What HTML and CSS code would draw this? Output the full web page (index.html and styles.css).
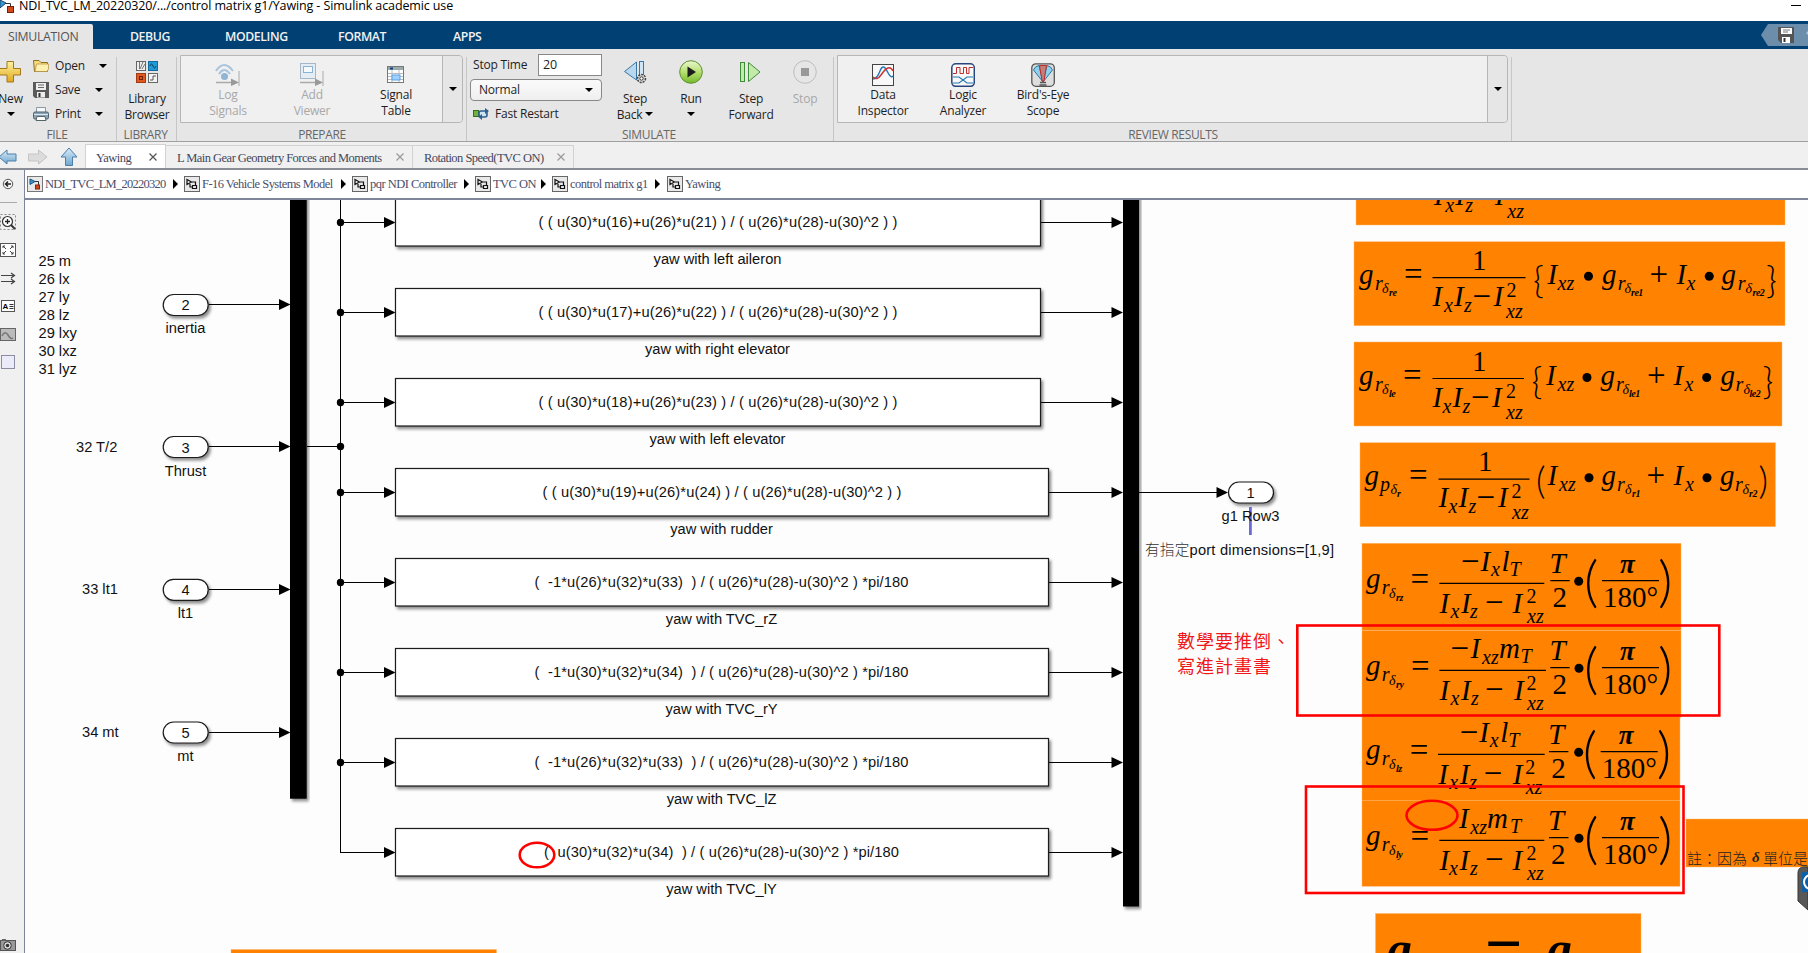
FILE: index.html
```html
<!DOCTYPE html>
<html lang="en">
<head>
<meta charset="utf-8">
<title>Simulink</title>
<link rel="stylesheet" href="styles.css">
</head>
<body>
<div class="app">
<header class="titlebar">
  <svg class="title-icon" width="14" height="14" viewBox="0 0 14 14"><path d="M0 0L6 3L0 8Z" fill="#2f9bd8" stroke="#1c3f66"/><path d="M5 3.500H10.500V7" fill="none" stroke="#333"/><rect x="7.500" y="6.500" width="6" height="6" fill="#d4481a" stroke="#6e2008"/></svg>
  <span class="title-text">NDI_TVC_LM_20220320/.../control matrix g1/Yawing - Simulink academic use</span>
  <span class="minimize"></span>
</header>

<nav class="tabs">
  <span class="tab active">SIMULATION</span>
  <span class="tab t-debug">DEBUG</span>
  <span class="tab t-model">MODELING</span>
  <span class="tab t-format">FORMAT</span>
  <span class="tab t-apps">APPS</span>
  <svg class="quick" width="47" height="22" viewBox="0 0 47 22"><path d="M0 11L7 0H47V22H7Z" fill="#6c8eab"/><g transform="translate(17 3)"><path d="M0 0H16V16H3L0 13Z" fill="#555"/><rect x="3" y="1" width="11" height="6" fill="#fff"/><path d="M5 3H12M5 5H10" stroke="#777"/><rect x="4" y="10" width="8" height="6" fill="#fff"/><rect x="5.500" y="11" width="2" height="4" fill="#333"/></g><path d="M45 9l2-2v4z" fill="#a9c6de"/></svg>
</nav>

<section class="ribbon">
  <div class="group g-file">
    <div class="body">
      <div class="new"><svg width="22" height="24" viewBox="0 0 22 24"><defs><linearGradient id="gold" x1="0" y1="0" x2="0" y2="1"><stop offset="0" stop-color="#fff3a0"/><stop offset="1" stop-color="#e0a81c"/></linearGradient></defs><path d="M7 1.500H13.500V8.500H20.500V15H13.500V22H7V15H-1V8.500H7Z" fill="url(#gold)" stroke="#a5771b"/></svg><span>New</span><i class="caret"></i></div>
      <div class="files">
        <div class="frow"><svg width="16" height="16" viewBox="0 0 16 16"><path d="M.5 2.500H6L8 4.500H14.500V13.500H1.500Z" fill="#f4dc7c" stroke="#8f6d25"/><path d="M3.500 6H15.500V11L14 13.500H2Z" fill="#fff0b0" stroke="#b18e3d" stroke-width=".7"/></svg><span>Open</span><i class="caret shift"></i></div>
        <div class="frow"><svg width="16" height="16" viewBox="0 0 16 16"><path d="M0 0H16V16H2L0 14Z" fill="#5a5a5a"/><rect x="3" y="1" width="10" height="7" fill="#eee"/><path d="M5 3H11M5 5.500H11" stroke="#666"/><rect x="4" y="10" width="8" height="5.500" fill="#eee"/><rect x="5.500" y="11" width="2" height="4" fill="#333"/></svg><span>Save</span><i class="caret"></i></div>
        <div class="frow"><svg width="16" height="16" viewBox="0 0 16 16"><path d="M3.500 1.500H12.500V7H3.500Z" fill="#f5f8fa" stroke="#8a99a5"/><rect x=".5" y="6" width="15" height="7" rx="1.500" fill="#8ba3b5" stroke="#4d6170"/><path d="M1 8.500H15" stroke="#d8e6ee"/><path d="M4 10.500H12L13 14.500H3Z" fill="#fff" stroke="#566"/></svg><span>Print</span><i class="caret"></i></div>
      </div>
    </div>
    <div class="glabel">FILE</div>
  </div>

  <div class="group g-lib">
    <div class="body center">
      <div class="big"><svg width="24" height="24" viewBox="0 0 24 24"><rect x="1.500" y="1.500" width="9" height="9" fill="#eee" stroke="#666"/><path d="M4.500 2V9M8 2L5 9M10 4L7 9" stroke="#777" fill="none"/><rect x="13.500" y="1.500" width="9" height="9" fill="#209ad4" stroke="#126a9d"/><path d="M15 6q1.500-4 3 0t3 0" stroke="#083d60" fill="none"/><rect x="1.500" y="13.500" width="9" height="9" fill="#e05a20" stroke="#a03a10"/><rect x="4.500" y="16.500" width="3" height="3" fill="none" stroke="#6e2008"/><rect x="13.500" y="13.500" width="9" height="9" fill="#f4f4f4" stroke="#666"/><path d="M15 20H18V16H21" fill="none" stroke="#555"/></svg><span>Library<br>Browser</span></div>
    </div>
    <div class="glabel">LIBRARY</div>
  </div>

  <div class="group g-prep">
    <div class="gallery">
      <div class="gitems w84">
        <div class="gi off"><svg width="26" height="24" viewBox="0 0 26 24"><path d="M1 8Q9-4 18 8M4 11Q9 3 15 11" fill="none" stroke="#a9c4dc" stroke-width="2"/><circle cx="9.500" cy="13.500" r="3.500" fill="#8fb4d4"/><path d="M1 19.500H17" stroke="#aaa" stroke-width="1.500"/><path d="M16 15.500L24 19.500L16 23Z" fill="#999"/><path d="M24 8V23" stroke="#aaa"/></svg><span>Log<br>Signals</span></div>
        <div class="gi off"><svg width="26" height="24" viewBox="0 0 26 24"><rect x="1.500" y=".5" width="15" height="15" fill="#e4edf4" stroke="#a6b8c8"/><rect x="4.500" y="3.500" width="9" height="6" fill="#f6fafd" stroke="#8bb3d4"/><path d="M1 19.500H17" stroke="#aaa" stroke-width="1.500"/><path d="M16 15.500L24 19.500L16 23Z" fill="#999"/><path d="M24 8V23" stroke="#aaa"/></svg><span>Add<br>Viewer</span></div>
        <div class="gi"><svg width="20" height="24" viewBox="0 0 20 24"><rect x="1.500" y="3.500" width="16" height="16" fill="#fff" stroke="#777"/><rect x="2" y="4" width="15" height="3" fill="#9aa"/><rect x="4" y="4.500" width="3" height="2" fill="#15407a"/><path d="M2 10.500H17M2 13.500H17M2 16.500H17M6 7V19M13 7V19" stroke="#bbb"/><rect x="6" y="12" width="8" height="5" fill="#9fd0ff" stroke="#5aa2e8"/></svg><span>Signal<br>Table</span></div>
      </div>
      <div class="gmore"><i class="caret"></i></div>
    </div>
    <div class="glabel">PREPARE</div>
  </div>

  <div class="group g-sim">
    <div class="body">
      <div class="simopts">
        <div class="stop"><span>Stop Time</span><div class="field">20</div></div>
        <div class="select"><span>Normal</span><i class="caret"></i></div>
        <div class="fast"><svg width="17" height="14" viewBox="0 0 17 14"><rect x=".5" y="3.500" width="5" height="6" fill="#6cb33f" stroke="#36701a"/><rect x="6" y="4" width="8" height="6" rx="2" fill="#cfe2f0" stroke="#2c5f8d" stroke-width="1.600"/><path d="M12 1L16 4L12 7ZM9 7L5.500 10L9 13Z" fill="#2c5f8d"/></svg><span>Fast Restart</span></div>
      </div>
      <div class="big s1"><svg width="24" height="24" viewBox="0 0 24 24"><path d="M13.500 2V20L1.500 11.500Z" fill="#b9d8ee" stroke="#3b77a6"/><rect x="16.500" y="1.500" width="4" height="17" fill="#cfe6f6" stroke="#3b77a6"/><circle cx="18.500" cy="18.500" r="4" fill="#ddd" stroke="#444" stroke-width="1.500" stroke-dasharray="2 1"/><circle cx="18.500" cy="18.500" r="1.700" fill="#fff" stroke="#333"/></svg><span>Step<br>Back <i class="caret"></i></span></div>
      <div class="big s2"><svg width="24" height="24" viewBox="0 0 24 24"><defs><linearGradient id="grn" x1="0" y1="0" x2="0" y2="1"><stop offset="0" stop-color="#eaf8d0"/><stop offset=".5" stop-color="#b6df70"/><stop offset="1" stop-color="#74b82c"/></linearGradient></defs><circle cx="12" cy="12" r="11.300" fill="url(#grn)" stroke="#5f8f32"/><path d="M8.500 6.500L17 12L8.500 17.500Z" fill="#1c1c1c"/></svg><span>Run<br><i class="caret"></i></span></div>
      <div class="big s3"><svg width="24" height="24" viewBox="0 0 24 24"><rect x="1.500" y="2.500" width="4" height="19" fill="#c4eaa8" stroke="#3f8a3b"/><path d="M9.500 2.500L21 12L9.500 21.500Z" fill="#c4eaa8" stroke="#3f8a3b"/></svg><span>Step<br>Forward</span></div>
      <div class="big s4 off"><svg width="24" height="24" viewBox="0 0 24 24"><circle cx="12" cy="12" r="11.300" fill="#e6e6e6" stroke="#bdbdbd"/><rect x="8" y="8" width="8" height="8" fill="#999"/></svg><span>Stop</span></div>
    </div>
    <div class="glabel">SIMULATE</div>
  </div>

  <div class="group g-rev">
    <div class="gallery">
      <div class="gitems w80">
        <div class="gi"><svg width="24" height="24" viewBox="0 0 24 24"><rect x="1.500" y="1.500" width="21" height="21" fill="#f8f8f8" stroke="#444"/><path d="M2 16Q6 16 9 8T16 8T22 13" fill="none" stroke="#2577b5" stroke-width="1.400"/><path d="M2 14Q6 18 10 12T17 5T22 8" fill="none" stroke="#c33" stroke-width="1.400"/></svg><span>Data<br>Inspector</span></div>
        <div class="gi"><svg width="24" height="24" viewBox="0 0 24 24"><rect x=".8" y=".8" width="22.500" height="22.500" rx="4" fill="#f8f8f8" stroke="#27467e" stroke-width="1.500"/><path d="M2 10.500H5.500V4.500H9V10.500H12.500V4.500H15.500V10.500H18V4.500H22" fill="none" stroke="#c22b2b"/><path d="M2 14H8L16 20H22M2 20H8L16 14H22" fill="none" stroke="#2577b5" stroke-width="1.200"/></svg><span>Logic<br>Analyzer</span></div>
        <div class="gi"><svg width="24" height="24" viewBox="0 0 24 24"><rect x=".8" y=".8" width="22.500" height="22.500" rx="4" fill="#dedede" stroke="#555" stroke-width="1.300"/><path d="M2.500 7Q4 3 8 2.500L12 19Z M21.500 7Q20 3 16 2.500L12 19Z" fill="#8fd0ee" stroke="#2879a8"/><path d="M8.500 2.500H15.500L13 18H11Z" fill="#bf8077" stroke="#c22b2b"/><path d="M9 19.500H15M8.500 22H15.500" stroke="#555" stroke-width="1.500"/></svg><span>Bird's-Eye<br>Scope</span></div>
      </div>
      <div class="gmore"><i class="caret"></i></div>
    </div>
    <div class="glabel">REVIEW RESULTS</div>
  </div>
</section>

<section class="doctabs">
  <div class="arrows">
    <svg width="85" height="26" viewBox="0 0 85 26"><defs><linearGradient id="blu" x1="0" y1="0" x2="0" y2="1"><stop offset="0" stop-color="#d8ecf8"/><stop offset="1" stop-color="#6fa6cf"/></linearGradient></defs><path d="M-1 15L7 8V12H16V19H7V22Z" fill="url(#blu)" stroke="#4a7ea8"/><path d="M47 15L38.500 8V12H28.500V19H38.500V22Z" fill="#dcdcdc" stroke="#c4c4c4"/><path d="M69 6L77 15H72.500V23.500H65.500V15H61Z" fill="url(#blu)" stroke="#4a7ea8"/></svg>
  </div>
  <div class="dt on d1"><span>Yawing</span><svg width="8" height="8" viewBox="0 0 8 8"><path d="M.5.5L7.500 7.500M7.500.5L.5 7.500" stroke="#555" stroke-width="1.200"/></svg></div>
  <div class="dt d2"><span>L Main Gear Geometry Forces and Moments</span><svg width="8" height="8" viewBox="0 0 8 8"><path d="M.5.5L7.500 7.500M7.500.5L.5 7.500" stroke="#999" stroke-width="1.200"/></svg></div>
  <div class="dt d3"><span>Rotation Speed(TVC ON)</span><svg width="8" height="8" viewBox="0 0 8 8"><path d="M.5.5L7.500 7.500M7.500.5L.5 7.500" stroke="#999" stroke-width="1.200"/></svg></div>
</section>

<div class="work">
<aside class="rail">
  <svg width="24" height="783" viewBox="0 170 24 783">
    <circle cx="8" cy="184" r="4.700" fill="#f8f8f8" stroke="#555"/><path d="M11 184H6M8 181.500L5.500 184L8 186.500" fill="none" stroke="#222" stroke-width="1.500"/>
    <path d="M0 202.500H17" stroke="#aaa"/>
    <rect x=".5" y="214.500" width="15" height="15" fill="none" stroke="#888" stroke-dasharray="2 2"/><circle cx="7.500" cy="221.500" r="5" fill="#fff" stroke="#333" stroke-width="1.200"/><path d="M5 221.500H10M7.500 219V224" stroke="#222" stroke-width="1.300"/><path d="M11 225L15 229" stroke="#333" stroke-width="2"/>
    <rect x=".5" y="243.500" width="15" height="13" fill="#fff" stroke="#555"/><path d="M3 248V246H5M11 246H13V248M13 252V254H11M5 254H3V252M3 246L6 249M13 246L10 249M13 254L10 251M3 254L6 251" fill="none" stroke="#444"/>
    <path d="M1 275.500H14M1 281.500H14M11 273L14.500 275.500L11 278M11 279L14.500 281.500L11 284" fill="none" stroke="#444" stroke-width="1.200"/>
    <rect x="1.500" y="300.500" width="13" height="11" fill="#fff" stroke="#555"/><text x="2.500" y="309" class="mini">A</text><path d="M9.500 304.500H13.500M9.500 306.500H13.500M9.500 308.500H13.500" stroke="#333"/>
    <rect x=".5" y="328.500" width="15" height="12" fill="#bbb" stroke="#666"/><path d="M2 336Q5 330 8 335T13 338" fill="none" stroke="#777" stroke-width="1.500"/>
    <rect x="1.500" y="355.500" width="13" height="13" fill="#ebebfa" stroke="#8a8ea0"/>
    <rect x=".5" y="940.500" width="15" height="10" fill="#999" stroke="#555"/><rect x="2" y="939" width="4" height="2" fill="#666"/><circle cx="7.500" cy="945.500" r="3.800" fill="#ddd" stroke="#333"/><circle cx="7.500" cy="945.500" r="1.800" fill="#333"/>
  </svg>
</aside>
<main class="pane">
  <div class="crumbs">
    <svg class="ci" viewBox="0 0 16 16"><rect x=".5" y=".5" width="15" height="15" fill="#e9e9e9" stroke="#777"/><path d="M3 3L8 5.500L3 8.500Z" fill="#2f9bd8" stroke="#1c4f76"/><path d="M8 5.500H11.500V9" fill="none" stroke="#333"/><rect x="8.500" y="9" width="4" height="4" fill="#d4481a" stroke="#7e2808"/></svg><span class="b1">NDI_TVC_LM_20220320</span><i class="tri"></i>
    <svg class="ci" viewBox="0 0 16 16"><rect x=".5" y=".5" width="15" height="15" fill="#e9e9e9" stroke="#666"/><path d="M3 3.500L7.500 6L3 8.500ZM7.500 6H11.500V9M8.500 9.500H12.500V12.500H8.500ZM8.500 11H6V8" fill="none" stroke="#111" stroke-width="1.200"/></svg><span class="b2">F-16 Vehicle Systems Model</span><i class="tri"></i>
    <svg class="ci" viewBox="0 0 16 16"><rect x=".5" y=".5" width="15" height="15" fill="#e9e9e9" stroke="#666"/><path d="M3 3.500L7.500 6L3 8.500ZM7.500 6H11.500V9M8.500 9.500H12.500V12.500H8.500ZM8.500 11H6V8" fill="none" stroke="#111" stroke-width="1.200"/></svg><span class="b3">pqr NDI Controller</span><i class="tri"></i>
    <svg class="ci" viewBox="0 0 16 16"><rect x=".5" y=".5" width="15" height="15" fill="#e9e9e9" stroke="#666"/><path d="M3 3.500L7.500 6L3 8.500ZM7.500 6H11.500V9M8.500 9.500H12.500V12.500H8.500ZM8.500 11H6V8" fill="none" stroke="#111" stroke-width="1.200"/></svg><span class="b4">TVC ON</span><i class="tri"></i>
    <svg class="ci" viewBox="0 0 16 16"><rect x=".5" y=".5" width="15" height="15" fill="#e9e9e9" stroke="#666"/><path d="M3 3.500L7.500 6L3 8.500ZM7.500 6H11.500V9M8.500 9.500H12.500V12.500H8.500ZM8.500 11H6V8" fill="none" stroke="#111" stroke-width="1.200"/></svg><span class="b5">control matrix g1</span><i class="tri last"></i>
    <svg class="ci" viewBox="0 0 16 16"><rect x=".5" y=".5" width="15" height="15" fill="#e9e9e9" stroke="#666"/><path d="M3 3.500L7.500 6L3 8.500ZM7.500 6H11.500V9M8.500 9.500H12.500V12.500H8.500ZM8.500 11H6V8" fill="none" stroke="#111" stroke-width="1.200"/></svg><span class="b6">Yawing</span>
  </div>

  <svg class="canvas" width="1783" height="753" viewBox="25 200 1783 753">
    <defs>
      <filter id="sh" x="-10%" y="-20%" width="125%" height="150%"><feDropShadow dx="2" dy="2.500" stdDeviation="1.500" flood-color="#000" flood-opacity=".45"/></filter>
      <path id="ah" d="M-11.500 -5.500L0 0L-11.500 5.500Z"/>
    </defs>

    <!-- mux and demux bars -->
    <rect x="290" y="180" width="16.700" height="618.700" filter="url(#sh)"/>
    <rect x="1123" y="180" width="16" height="726.500" filter="url(#sh)"/>

    <!-- signal lines -->
    <g class="wire">
      <path d="M340.500 200V852.500"/><path d="M307 446.500H340.500"/>
      <path d="M209 304.500H282M209 446.500H282M209 589.500H282M209 732.500H282"/>
      <path d="M340 222.500H386M340 312.500H386M340 402.500H386M340 492.500H386M340 582.500H386M340 672.500H386M340 762.500H386M340 852.500H386"/>
      <path d="M1041 222.500H1114M1041 312.500H1114M1041 402.500H1114M1049 492.500H1114M1049 582.500H1114M1049 672.500H1114M1049 762.500H1114M1049 852.500H1114M1139 492.500H1218"/>
    </g>
    <g>
      <use href="#ah" x="290.500" y="304.500"/><use href="#ah" x="290.500" y="446.500"/><use href="#ah" x="290.500" y="589.500"/><use href="#ah" x="290.500" y="732.500"/>
      <use href="#ah" x="395.500" y="222.500"/><use href="#ah" x="395.500" y="312.500"/><use href="#ah" x="395.500" y="402.500"/><use href="#ah" x="395.500" y="492.500"/><use href="#ah" x="395.500" y="582.500"/><use href="#ah" x="395.500" y="672.500"/><use href="#ah" x="395.500" y="762.500"/><use href="#ah" x="395.500" y="852.500"/>
      <use href="#ah" x="1123" y="222.500"/><use href="#ah" x="1123" y="312.500"/><use href="#ah" x="1123" y="402.500"/><use href="#ah" x="1123" y="492.500"/><use href="#ah" x="1123" y="582.500"/><use href="#ah" x="1123" y="672.500"/><use href="#ah" x="1123" y="762.500"/><use href="#ah" x="1123" y="852.500"/>
      <use href="#ah" x="1228" y="492.500"/>
      <circle cx="340.500" cy="222.500" r="3.700"/><circle cx="340.500" cy="312.500" r="3.700"/><circle cx="340.500" cy="402.500" r="3.700"/><circle cx="340.500" cy="446.500" r="3.700"/><circle cx="340.500" cy="492.500" r="3.700"/><circle cx="340.500" cy="582.500" r="3.700"/><circle cx="340.500" cy="672.500" r="3.700"/><circle cx="340.500" cy="762.500" r="3.700"/>
    </g>

    <!-- function blocks -->
    <g class="block">
      <rect x="395.500" y="190.500" width="645" height="55.500"/><rect x="395.500" y="288.500" width="645" height="47.500"/><rect x="395.500" y="378.500" width="645" height="47.500"/>
      <rect x="395.500" y="468.500" width="653" height="47.500"/><rect x="395.500" y="558.500" width="653" height="47.500"/><rect x="395.500" y="648.500" width="653" height="47.500"/><rect x="395.500" y="738.500" width="653" height="47.500"/><rect x="395.500" y="828.500" width="653" height="47.500"/>
      <rect x="163.200" y="294.500" width="45" height="21" rx="10.500"/><rect x="163.200" y="436.500" width="45" height="21" rx="10.500"/><rect x="163.200" y="579.300" width="45" height="21" rx="10.500"/><rect x="163.200" y="722" width="45" height="21" rx="10.500"/>
      <rect x="1228.500" y="482" width="45" height="21" rx="10.500"/>
    </g>
    <rect x="1249" y="507" width="2.800" height="28" fill="#6a6ad8"/>

    <g class="lbl mid">
      <text x="718" y="227.300" textLength="359">( ( u(30)*u(16)+u(26)*u(21) ) / ( u(26)*u(28)-u(30)^2 ) )</text><text x="717.500" y="264">yaw with left aileron</text>
      <text x="718" y="317.300" textLength="359">( ( u(30)*u(17)+u(26)*u(22) ) / ( u(26)*u(28)-u(30)^2 ) )</text><text x="717.500" y="354">yaw with right elevator</text>
      <text x="718" y="407.300" textLength="359">( ( u(30)*u(18)+u(26)*u(23) ) / ( u(26)*u(28)-u(30)^2 ) )</text><text x="717.500" y="444">yaw with left elevator</text>
      <text x="722" y="497.300" textLength="359">( ( u(30)*u(19)+u(26)*u(24) ) / ( u(26)*u(28)-u(30)^2 ) )</text><text x="721.500" y="534">yaw with rudder</text>
      <text x="721.500" y="587.300" textLength="374">(  -1*u(26)*u(32)*u(33)  ) / ( u(26)*u(28)-u(30)^2 ) *pi/180</text><text x="721.500" y="624">yaw with TVC_rZ</text>
      <text x="721.500" y="677.300" textLength="374">(  -1*u(30)*u(32)*u(34)  ) / ( u(26)*u(28)-u(30)^2 ) *pi/180</text><text x="721.500" y="714">yaw with TVC_rY</text>
      <text x="721.500" y="767.300" textLength="374">(  -1*u(26)*u(32)*u(33)  ) / ( u(26)*u(28)-u(30)^2 ) *pi/180</text><text x="721.500" y="804">yaw with TVC_lZ</text>
      <text x="721.500" y="857.300" textLength="355">(  u(30)*u(32)*u(34)  ) / ( u(26)*u(28)-u(30)^2 ) *pi/180</text><text x="721.500" y="894">yaw with TVC_lY</text>
      <text x="185.500" y="310">2</text><text x="185.500" y="333">inertia</text>
      <text x="185.500" y="452.500">3</text><text x="185.500" y="475.500">Thrust</text>
      <text x="185.500" y="595">4</text><text x="185.500" y="618.300">lt1</text>
      <text x="185.500" y="738">5</text><text x="185.500" y="761">mt</text>
      <text x="1250.500" y="497.500">1</text><text x="1250.500" y="521">g1 Row3</text>
    </g>
    <g class="lbl">
      <text x="38.500" y="266">25 m</text><text x="38.500" y="284">26 lx</text><text x="38.500" y="302">27 ly</text><text x="38.500" y="320">28 lz</text><text x="38.500" y="338">29 lxy</text><text x="38.500" y="356">30 lxz</text><text x="38.500" y="374">31 lyz</text>
      <text x="76" y="452">32 T/2</text><text x="82" y="594">33 lt1</text><text x="82" y="737">34 mt</text>
      <text x="1145" y="555.300" textLength="189"><tspan class="cjk">有指定</tspan>port dimensions=[1,9]</text>
    </g>
    <g class="red-note"><text x="1177" y="648">數學要推倒、</text><text x="1177" y="672.500">寫進計畫書</text></g>

    <!-- equation panels -->
    <g class="panel">
      <rect x="1356" y="190" width="429" height="35"/><rect x="1354" y="241.700" width="431" height="84"/><rect x="1354" y="342" width="428" height="84"/><rect x="1360" y="442.700" width="415.500" height="84"/>
      <rect x="1362" y="543.300" width="319" height="87"/><rect x="1362" y="630.500" width="319" height="87"/><rect x="1362" y="716" width="318" height="84.300"/><rect x="1362" y="800.300" width="318" height="86"/>
      <rect x="1686" y="819" width="130" height="48"/><rect x="1375.500" y="913.500" width="265.500" height="60"/><rect x="231" y="949.500" width="265.500" height="20"/>
    </g>

    <g class="eq" transform="translate(1355.300 141.700)">
      <text><tspan x="78.500" y="63.700">I</tspan><tspan class="s" x="90" y="70">x</tspan><tspan x="100" y="63.700">I</tspan><tspan class="s" x="110" y="70">z</tspan><tspan x="139.500" y="63.700">I</tspan><tspan class="s" x="152" y="76">xz</tspan></text></g>

    <g class="eq" transform="translate(1354 242)"><path class="bar" d="M78.500 35.700H171.500"/><circle cx="234.500" cy="34.300" r="4.500"/><circle cx="355.300" cy="34.300" r="4.500"/>
      <text><tspan x="5" y="42">g</tspan><tspan class="s" x="21" y="48.300">r</tspan><tspan class="d" x="28" y="51">δ</tspan><tspan class="t" x="35" y="54">re</tspan><tspan class="o" x="50" y="43">=</tspan><tspan class="n" x="118" y="27.500">1</tspan><tspan x="78.500" y="63.700">I</tspan><tspan class="s" x="90" y="70">x</tspan><tspan x="100" y="63.700">I</tspan><tspan class="s" x="110" y="70">z</tspan><tspan class="o" x="118.500" y="65">−</tspan><tspan x="139.500" y="63.700">I</tspan><tspan class="n s" x="152.500" y="54.700">2</tspan><tspan class="s" x="152" y="76">xz</tspan><tspan class="b" x="179" y="50.500">{</tspan><tspan x="193.500" y="42">I</tspan><tspan class="s" x="203.500" y="48.300">xz</tspan><tspan x="248" y="42">g</tspan><tspan class="s" x="263.700" y="48.300">r</tspan><tspan class="d" x="270.500" y="51">δ</tspan><tspan class="t" x="277" y="54">re1</tspan><tspan class="o" x="295.500" y="43">+</tspan><tspan x="322.500" y="42">I</tspan><tspan class="s" x="332.500" y="48.300">x</tspan><tspan x="367.500" y="42">g</tspan><tspan class="s" x="383.700" y="48.300">r</tspan><tspan class="d" x="391.500" y="51">δ</tspan><tspan class="t" x="398.500" y="54">re2</tspan><tspan class="b" x="412" y="50.500">}</tspan></text></g>

    <g class="eq" transform="translate(1354 342.500)"><path class="bar" d="M78.500 36H170"/><circle cx="233" cy="35" r="4.500"/><circle cx="352.700" cy="35" r="4.500"/>
      <text><tspan x="5" y="42.500">g</tspan><tspan class="s" x="21" y="48.500">r</tspan><tspan class="d" x="28" y="51.500">δ</tspan><tspan class="t" x="35" y="54.500">le</tspan><tspan class="o" x="49" y="43.500">=</tspan><tspan class="n" x="118" y="28">1</tspan><tspan x="78.500" y="64">I</tspan><tspan class="s" x="88.500" y="70.500">x</tspan><tspan x="98.500" y="64">I</tspan><tspan class="s" x="108.500" y="70.500">z</tspan><tspan class="o" x="117" y="65.500">−</tspan><tspan x="138" y="64">I</tspan><tspan class="n s" x="152" y="55">2</tspan><tspan class="s" x="152" y="76.500">xz</tspan><tspan class="b" x="177.500" y="51">{</tspan><tspan x="192" y="42.500">I</tspan><tspan class="s" x="203.500" y="48.700">xz</tspan><tspan x="246.500" y="42.500">g</tspan><tspan class="s" x="262" y="48.700">r</tspan><tspan class="d" x="268.500" y="51.500">δ</tspan><tspan class="t" x="275" y="54.500">le1</tspan><tspan class="o" x="293" y="43.500">+</tspan><tspan x="319.500" y="42.500">I</tspan><tspan class="s" x="330.500" y="48.700">x</tspan><tspan x="366.500" y="42.500">g</tspan><tspan class="s" x="381.500" y="48.700">r</tspan><tspan class="d" x="389.500" y="51.500">δ</tspan><tspan class="t" x="395.500" y="54.500">le2</tspan><tspan class="b" x="408.500" y="51">}</tspan></text></g>

    <g class="eq" transform="translate(1360 442.700)"><path class="bar" d="M78.500 36.500H169.500"/><circle cx="229" cy="35" r="4.500"/><circle cx="347" cy="35" r="4.500"/>
      <text><tspan x="4.500" y="42.500">g</tspan><tspan class="s" x="20" y="48.500">p</tspan><tspan class="d" x="30.500" y="51.500">δ</tspan><tspan class="t" x="37" y="54.500">r</tspan><tspan class="o" x="49" y="43.500">=</tspan><tspan class="n" x="118" y="28">1</tspan><tspan x="78.500" y="64">I</tspan><tspan class="s" x="88.500" y="70.500">x</tspan><tspan x="98.500" y="64">I</tspan><tspan class="s" x="108.500" y="70.500">z</tspan><tspan class="o" x="116.500" y="65.500">−</tspan><tspan x="138" y="64">I</tspan><tspan class="n s" x="151.500" y="55">2</tspan><tspan class="s" x="152" y="76.500">xz</tspan><tspan class="b" x="176" y="51">(</tspan><tspan x="187.500" y="42.500">I</tspan><tspan class="s" x="199" y="48.700">xz</tspan><tspan x="241.500" y="42.500">g</tspan><tspan class="s" x="257" y="48.700">r</tspan><tspan class="d" x="265" y="51.500">δ</tspan><tspan class="t" x="272" y="54.500">r1</tspan><tspan class="o" x="286.500" y="43.500">+</tspan><tspan x="313.500" y="42.500">I</tspan><tspan class="s" x="325" y="48.700">x</tspan><tspan x="360" y="42.500">g</tspan><tspan class="s" x="375" y="48.700">r</tspan><tspan class="d" x="382.500" y="51.500">δ</tspan><tspan class="t" x="389" y="54.500">r2</tspan><tspan class="b" x="398.500" y="51">)</tspan></text></g>

    <g class="eq" transform="translate(1362 543.300)"><path class="bar" d="M77.300 40H182.300M188.300 37.300H207.700M240 37.300H297"/><circle cx="216.700" cy="38" r="4.500"/>
      <text><tspan x="4" y="45">g</tspan><tspan class="s" x="19.700" y="51">r</tspan><tspan class="d" x="27" y="54.500">δ</tspan><tspan class="t" x="34" y="57.500">rz</tspan><tspan class="o" x="48.500" y="46.500">=</tspan><tspan class="o" x="99" y="28.700">−</tspan><tspan x="118.500" y="27.700">I</tspan><tspan class="s" x="129" y="32.500">x</tspan><tspan x="139.500" y="27.700">l</tspan><tspan class="s" x="147.500" y="33">T</tspan><tspan x="77.500" y="69.300">I</tspan><tspan class="s" x="88.500" y="75">x</tspan><tspan x="99" y="69.300">I</tspan><tspan class="s" x="108" y="75">z</tspan><tspan class="o" x="123" y="70">−</tspan><tspan x="150.500" y="69.300">I</tspan><tspan class="n s" x="164.500" y="60">2</tspan><tspan class="s" x="165" y="79.300">xz</tspan><tspan x="187.500" y="29.700">T</tspan><tspan class="n" x="190.500" y="64">2</tspan><tspan class="pi" x="258" y="29.700">π</tspan><tspan class="n" x="241" y="64">180°</tspan></text>
      <text class="par" x="222" y="57.500">(</text><text class="par" x="296" y="57.500">)</text></g>

    <g class="eq" transform="translate(1362 630.300)"><path class="bar" d="M77.300 40H184M188.300 37.300H207.700M240 37.300H297"/><circle cx="217" cy="38" r="4.500"/>
      <text><tspan x="4" y="45">g</tspan><tspan class="s" x="19.700" y="51">r</tspan><tspan class="d" x="27" y="54.500">δ</tspan><tspan class="t" x="34" y="57.500">ry</tspan><tspan class="o" x="49" y="46.500">=</tspan><tspan class="o" x="88.500" y="28.700">−</tspan><tspan x="108.500" y="27.700">I</tspan><tspan class="s" x="120" y="33.500">xz</tspan><tspan x="137" y="27.700">m</tspan><tspan class="s" x="158.500" y="33">T</tspan><tspan x="77.500" y="69.300">I</tspan><tspan class="s" x="88.500" y="75">x</tspan><tspan x="99" y="69.300">I</tspan><tspan class="s" x="109" y="75">z</tspan><tspan class="o" x="123" y="70">−</tspan><tspan x="152" y="69.300">I</tspan><tspan class="n s" x="164.500" y="60">2</tspan><tspan class="s" x="165" y="79.300">xz</tspan><tspan x="187.500" y="29.700">T</tspan><tspan class="n" x="190.500" y="64">2</tspan><tspan class="pi" x="258" y="29.700">π</tspan><tspan class="n" x="241" y="64">180°</tspan></text>
      <text class="par" x="222" y="57.500">(</text><text class="par" x="296" y="57.500">)</text></g>

    <g class="eq" transform="translate(1360.700 714.300)"><path class="bar" d="M77.300 40H184M188.300 37.300H207.700M240 37.300H297"/><circle cx="218" cy="38" r="4.500"/>
      <text><tspan x="5.300" y="45">g</tspan><tspan class="s" x="21" y="51">r</tspan><tspan class="d" x="28.300" y="54.500">δ</tspan><tspan class="t" x="35.300" y="57.500">lz</tspan><tspan class="o" x="49" y="46.500">=</tspan><tspan class="o" x="99" y="28.700">−</tspan><tspan x="118.500" y="27.700">I</tspan><tspan class="s" x="129" y="32.500">x</tspan><tspan x="139.500" y="27.700">l</tspan><tspan class="s" x="147.500" y="33">T</tspan><tspan x="77.500" y="69.300">I</tspan><tspan class="s" x="88.500" y="75">x</tspan><tspan x="99" y="69.300">I</tspan><tspan class="s" x="108.500" y="75">z</tspan><tspan class="o" x="123" y="70">−</tspan><tspan x="152" y="69.300">I</tspan><tspan class="n s" x="164.500" y="60">2</tspan><tspan class="s" x="165" y="79.300">xz</tspan><tspan x="187.500" y="29.700">T</tspan><tspan class="n" x="190.500" y="64">2</tspan><tspan class="pi" x="258" y="29.700">π</tspan><tspan class="n" x="241" y="64">180°</tspan></text>
      <text class="par" x="222" y="57.500">(</text><text class="par" x="296" y="57.500">)</text></g>

    <g class="eq" transform="translate(1362 800.300)"><path class="bar" d="M77.300 40H182.300M187 37.300H206.500M240 37.300H297"/><circle cx="217" cy="38" r="4.500"/>
      <text><tspan x="4" y="45">g</tspan><tspan class="s" x="19.700" y="51">r</tspan><tspan class="d" x="27" y="54.500">δ</tspan><tspan class="t" x="34" y="57.500">ly</tspan><tspan class="o" x="48.500" y="46.500">=</tspan><tspan x="97" y="27.700">I</tspan><tspan class="s" x="108.300" y="33.500">xz</tspan><tspan x="125" y="27.700">m</tspan><tspan class="s" x="148" y="33">T</tspan><tspan x="77.500" y="69.300">I</tspan><tspan class="s" x="87" y="75">x</tspan><tspan x="97.500" y="69.300">I</tspan><tspan class="s" x="108" y="75">z</tspan><tspan class="o" x="123" y="70">−</tspan><tspan x="150.500" y="69.300">I</tspan><tspan class="n s" x="164.500" y="60">2</tspan><tspan class="s" x="165" y="79.300">xz</tspan><tspan x="186" y="29.700">T</tspan><tspan class="n" x="189" y="64">2</tspan><tspan class="pi" x="258" y="29.700">π</tspan><tspan class="n" x="241" y="64">180°</tspan></text>
      <text class="par" x="222" y="57.500">(</text><text class="par" x="296" y="57.500">)</text></g>

    <text class="note"><tspan x="1687" y="864">註：因為</tspan><tspan class="delta" x="1752" y="862">δ</tspan><tspan x="1763" y="864">單位是</tspan></text>
    <text class="huge"><tspan x="1387" y="966">g</tspan><tspan class="up" x="1485" y="972">=</tspan><tspan x="1547" y="966">g</tspan></text>

    <!-- red markup -->
    <g class="mark"><rect x="1297.300" y="625.500" width="422" height="90"/><rect x="1306" y="786.500" width="377.500" height="106.500"/><ellipse cx="1432" cy="815.300" rx="25.500" ry="14.500"/><ellipse cx="537" cy="855" rx="17.300" ry="12.300"/></g>

    <path d="M1808 867H1804Q1798 867 1798 873V901L1808 910Z" fill="#585858" stroke="#333"/><rect x="1802" y="872" width="8" height="20" fill="#0f5fa8"/><circle cx="1811" cy="882" r="7" fill="none" stroke="#fff" stroke-width="2"/>
  </svg>
</main>
</div>
</div>
</body>
</html>
```
FILE: styles.css
```css
* { box-sizing: border-box; }
body { margin: 0; background: #fdfdfd; overflow: hidden; }
.app { width: 1808px; height: 953px; display: flex; flex-direction: column; overflow: hidden; font: 12px/16px "Open Sans", "Noto Sans", sans-serif; color: #1e1e1e; }
svg { display: block; flex: none; }
.titlebar { height: 21px; flex: none; background: #fff; display: flex; align-items: flex-start; }
.title-icon { margin-right: 5px; }
.title-text { font-size: 12.500px; line-height: 17px; margin-top: -3px; color: #000; white-space: nowrap; letter-spacing: -.12px; }
.minimize { margin: 5px 7px 0 auto; width: 10px; height: 1px; background: #000; }

.tabs { height: 28px; flex: none; background: #004073; display: flex; align-items: center; padding-top: 3px; }
.tab { color: #f2f2f2; font-weight: 600; font-size: 12.300px; line-height: 25px; letter-spacing: -.4px; white-space: nowrap; }
.tab.active { width: 93px; height: 25px; background: #e6e6e6; color: #555; font-weight: 400; padding-left: 8px; letter-spacing: -.3px; border-radius: 0 2px 0 0; }
.t-debug { width: 95px; margin-left: 37px; }
.t-model { width: 113px; }
.t-format { width: 115px; }
.quick { margin-left: auto; margin-top: -3px; }

.ribbon { height: 93px; flex: none; background: #e6e6e6; border-bottom: 1px solid #a0a0a0; display: flex; letter-spacing: -.2px; }
.group { display: flex; flex-direction: column; position: relative; height: 92px; }
.group::after { content: ""; position: absolute; right: 0; top: 8px; bottom: 0; width: 1px; background: #c6c6c6; }
.g-file { width: 117px; }
.g-lib { width: 60px; }
.g-prep { width: 290px; padding-left: 3px; }
.g-sim { width: 367px; }
.g-rev { width: 678px; padding-left: 3px; }
.body { display: flex; height: 78px; }
.body.center { justify-content: center; }
.glabel { height: 14px; line-height: 15px; text-align: center; color: #666; font-size: 12px; letter-spacing: -.35px; padding-right: 3px; }
.caret { display: inline-block; width: 0; height: 0; border: 4px solid transparent; border-top-color: #000; border-bottom: 0; }
.new { width: 22px; display: flex; flex-direction: column; align-items: center; padding-top: 11px; }
.new span { margin: 7px 0 5px -1px; }
.files { display: flex; flex-direction: column; padding: 5px 0 0 11px; }
.frow { height: 24px; width: 74px; display: flex; align-items: center; gap: 6px; }
.frow .caret { margin-left: auto; margin-right: 4px; }
.frow .caret.shift { margin-right: 0; }
.big, .gi { display: flex; flex-direction: column; align-items: center; text-align: center; white-space: nowrap; }
.big { padding-top: 11px; }
.big span { margin-top: 7px; }
.big .caret { vertical-align: 3px; }
.gallery { display: flex; height: 68px; margin: 6px 4px 4px 0; border: 1px solid #b6b6b6; border-radius: 0 4px 4px 0; background: #f0f0f0; }
.gitems { display: flex; flex: 1; padding: 7px 0 0 5px; }
.w84 .gi { width: 84px; }
.w80 .gi { width: 80px; }
.gmore { width: 20px; border-left: 1px solid #b6b6b6; background: #e6e6e6; border-radius: 0 4px 4px 0; display: flex; align-items: center; justify-content: center; }
.off { color: #a8a8a8; }
.simopts { width: 135px; padding: 5px 0 0 3px; }
.stop { display: flex; align-items: center; justify-content: space-between; height: 22px; padding-left: 3px; }
.field { width: 64px; height: 22px; background: #fff; border: 1px solid #888; line-height: 20px; padding-left: 4px; font-size: 12.500px; }
.select { height: 22px; margin-top: 3px; border: 1px solid #888; border-radius: 4px; background: linear-gradient(#fafafa, #efefef); display: flex; align-items: center; justify-content: space-between; padding: 0 8px; }
.fast { display: flex; align-items: center; gap: 5px; margin: 5px 0 0 3px; }
.s1 { width: 66px; } .s2 { width: 46px; } .s3 { width: 74px; } .s4 { width: 34px; }

.doctabs { height: 28px; flex: none; background: #f0f0f0; border-bottom: 2px solid #8b8d96; display: flex; align-items: flex-end; font: 12.500px/22px "Liberation Serif", serif; letter-spacing: -.53px; color: #44485c; }
.arrows { width: 85px; height: 26px; }
.dt { height: 23px; display: flex; align-items: center; justify-content: space-between; border: 1px solid #d2d2d2; border-width: 1px 1px 0 0; background: #f0f0f0; padding: 0 8px 0 11px; white-space: nowrap; }
.dt span { padding-top: 2px; }
.dt.on { height: 24px; background: #fff; border-left: 1px solid #d2d2d2; padding-left: 10px; }
.d1 { width: 81px; } .d2 { width: 247px; } .d3 { width: 161px; }

.work { display: flex; height: 783px; flex: none; }
.rail { width: 24px; background: #f0f0f0; }
.mini { font: bold 8px "Liberation Sans", sans-serif; }
.pane { width: 1784px; border-left: 1px solid #80849a; background: #fdfdfd; }
.crumbs { height: 30px; border-bottom: 2px solid #80869a; background: #fff; display: flex; align-items: center; padding-left: 2px; font: 12.500px/18px "Liberation Serif", serif; letter-spacing: -.53px; color: #4a4e6a; white-space: nowrap; }
.ci { width: 16px; height: 16px; margin-right: 2px; }
.tri { width: 0; height: 0; border: 5px solid transparent; border-left-color: #000; border-right: 0; margin-right: 6px; }
.tri.last { margin-right: 7px; }
.b1 { width: 128px; letter-spacing: -.75px; } .b2 { width: 139px; } .b3 { width: 94px; } .b4 { width: 48px; } .b5 { width: 85px; }

.canvas { background: #fdfdfd; }
.wire path { fill: none; stroke: #000; }
.block rect { fill: #fff; stroke: #1a1a1a; stroke-width: 1.200; filter: url(#sh); }
.lbl text { font: 14.670px "Liberation Sans", "Noto Sans CJK TC", sans-serif; fill: #111; white-space: pre; }
.lbl .cjk { font-family: "Noto Sans CJK TC", sans-serif; font-weight: 300; fill: #333; }
.mid text { text-anchor: middle; }
.red-note text { font: 18px "Noto Sans CJK TC", sans-serif; letter-spacing: 1px; fill: #f01818; }
.panel rect { fill: #ff8200; stroke: #ffb870; stroke-width: .4; }
.eq { font: italic 29px "Liberation Serif", serif; fill: #000; }
.eq .bar { stroke: #000; stroke-width: 1.200; fill: none; }
.eq .n { font-style: normal; }
.eq .o { font-style: normal; font-size: 33px; }
.eq .s { font-size: 20px; }
.eq .d { font-size: 14px; }
.eq .t { font-size: 10px; font-weight: 700; letter-spacing: -.5px; }
.eq .pi { font-style: italic; font-weight: 700; font-size: 27px; }
.eq .b { font: 300 37px Lato, sans-serif; }
.eq .par { font: 300 56px Lato, sans-serif; }
.note { font: 300 15px "Noto Sans CJK TC", sans-serif; fill: #222; }
.note .delta { font: italic bold 15px "Liberation Serif", serif; }
.huge { font: italic bold 50px "Liberation Serif", serif; }
.huge .up { font-style: normal; font-size: 66px; }
.mark { fill: none; stroke: #f00; stroke-width: 2.600; }
```
